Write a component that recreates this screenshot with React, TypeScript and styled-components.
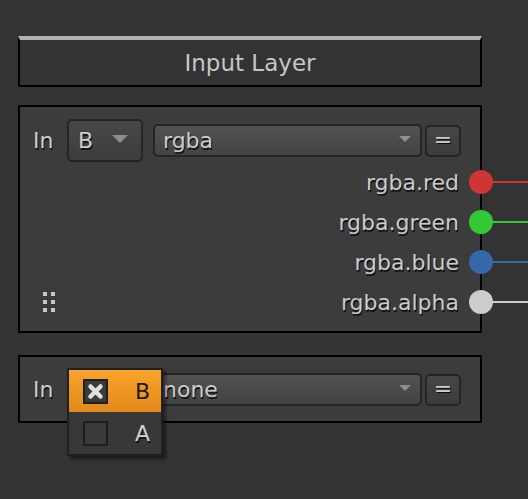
import React from "react";
import styled, { createGlobalStyle } from "styled-components";

const Global = createGlobalStyle`
  html, body { margin: 0; padding: 0; background: #333333; overflow: hidden; }
  body { font-family: "DejaVu Sans", "Liberation Sans", sans-serif; }
  * { box-sizing: border-box; }
`;

const Page = styled.div`
  width: 528px;
  height: 499px;
  padding: 36px 0 0 18px;
  display: flex;
  flex-direction: column;
`;

const TitleBox = styled.div`
  width: 464px;
  height: 51px;
  border: 2px solid #000;
  border-top: 4px solid #b2b2b2;
  display: flex;
  align-items: center;
  justify-content: center;
  color: #c6c6c6;
  font-size: 23px;
`;

const Panel = styled.div<{ $pt: number; $pb: number; $mt: number }>`
  width: 464px;
  margin-top: ${(p) => p.$mt}px;
  border: 2px solid #000;
  background: #3c3c3c;
  padding: ${(p) => p.$pt}px 0 ${(p) => p.$pb}px 13px;
  display: flex;
  flex-direction: column;
  position: relative;
`;

const Label = styled.span`
  color: #cbcbcb;
  font-size: 22px;
  text-shadow: 1px 2px 0 #141414;
  white-space: nowrap;
`;

const InputRow = styled.div`
  display: flex;
  align-items: center;
  height: 43px;
  margin-right: 19px;
  position: relative;
`;

const InLabel = styled(Label)`
  width: 34px;
`;

const Select = styled.div<{ $w: number; $h: number; $arrow: number; $ar: number }>`
  width: ${(p) => p.$w}px;
  height: ${(p) => p.$h}px;
  border: 2px solid #252525;
  border-radius: 5px;
  background: linear-gradient(#525252, #434343);
  display: flex;
  align-items: center;
  justify-content: space-between;
  padding: 0 ${(p) => p.$ar}px 0 8px;
  &::after {
    content: "";
    width: 0;
    height: 0;
    border-left: ${(p) => p.$arrow / 2}px solid transparent;
    border-right: ${(p) => p.$arrow / 2}px solid transparent;
    border-top: ${(p) => Math.round(p.$arrow / 2)}px solid #8e8e8e;
    margin-bottom: 4px;
  }
`;

const SmallSelect = styled(Select)`
  background: linear-gradient(#484848, #3d3d3d);
  margin-right: 10px;
  padding-left: 9px;
`;

const EqButton = styled.div`
  width: 36px;
  height: 32px;
  margin-left: 3px;
  border: 2px solid #252525;
  border-radius: 5px;
  background: linear-gradient(#464646, #3c3c3c);
  display: flex;
  align-items: center;
  justify-content: center;
  color: #cfcfcf;
  font-size: 22px;
  text-shadow: 1px 1px 0 #0e0e0e;
  padding-bottom: 2px;
`;

const ChannelRow = styled.div<{ $split?: boolean }>`
  height: 40px;
  display: flex;
  align-items: center;
  justify-content: ${(p) => (p.$split ? "space-between" : "flex-end")};
`;

const Port = styled.div<{ $c: string }>`
  width: 24px;
  height: 24px;
  border-radius: 50%;
  background: ${(p) => p.$c};
  margin-left: 10px;
  margin-right: -13px;
  position: relative;
  z-index: 1;
  &::after {
    content: "";
    position: absolute;
    left: 23px;
    top: 11px;
    width: 60px;
    height: 2px;
    background: ${(p) => p.$c};
  }
`;

const Right = styled.div`
  display: flex;
  align-items: center;
`;

const Dots = styled.div`
  margin-left: 10px;
  display: grid;
  grid-template-columns: 4px 4px;
  grid-auto-rows: 4px;
  gap: 4px;
`;

const Dot = styled.span`
  background: #c8c8c8;
`;

const Menu = styled.div`
  position: absolute;
  left: 0;
  top: 0;
  width: 96px;
  border: 2px solid #202020;
  background: #383838;
  box-shadow: 3px 3px 3px rgba(0, 0, 0, 0.45);
  z-index: 2;
  display: flex;
  flex-direction: column;
`;

const MenuItem = styled.div<{ $on?: boolean }>`
  height: 42px;
  display: flex;
  align-items: center;
  justify-content: space-between;
  padding: 0 11px 0 14px;
  background: ${(p) => (p.$on ? "linear-gradient(#f9a42b, #e2881b)" : "#383838")};
  color: ${(p) => (p.$on ? "#1c1c1c" : "#cfcfcf")};
  font-size: 22px;
  text-shadow: ${(p) => (p.$on ? "none" : "1px 2px 0 #141414")};
`;

const Check = styled.div`
  width: 25px;
  height: 25px;
  border: 2px solid #1e1e1e;
  background: #3a3a3a;
  display: flex;
  align-items: center;
  justify-content: center;
`;

const MenuAnchor = styled.div`
  position: relative;
  width: 76px;
  height: 43px;
  margin-right: 10px;
`;

const channels = [
  { name: "rgba.red", c: "#cf3535" },
  { name: "rgba.green", c: "#34c934" },
  { name: "rgba.blue", c: "#3767a9" },
  { name: "rgba.alpha", c: "#cccccc" },
];

export default function App() {
  return (
    <>
      <Global />
      <Page>
        <TitleBox>Input Layer</TitleBox>
        <Panel $pt={12} $pb={9} $mt={18}>
          <InputRow>
            <InLabel>In</InLabel>
            <SmallSelect $w={76} $h={43} $arrow={16} $ar={13}>
              <Label>B</Label>
            </SmallSelect>
            <Select $w={269} $h={33} $arrow={12} $ar={9}>
              <Label>rgba</Label>
            </Select>
            <EqButton>=</EqButton>
          </InputRow>
          {channels.map((ch, i) => {
            const last = i === channels.length - 1;
            return (
              <ChannelRow key={ch.name} $split={last}>
                {last && (
                  <Dots>
                    {Array.from({ length: 6 }).map((_, k) => (
                      <Dot key={k} />
                    ))}
                  </Dots>
                )}
                <Right>
                  <Label>{ch.name}</Label>
                  <Port $c={ch.c} />
                </Right>
              </ChannelRow>
            );
          })}
        </Panel>
        <Panel $pt={11} $pb={10} $mt={22}>
          <InputRow>
            <InLabel>In</InLabel>
            <MenuAnchor>
              <Menu>
                <MenuItem $on>
                  <Check>
                    <svg width="17" height="17" viewBox="0 0 17 17">
                      <path d="M3.5 3.5 L13.5 13.5 M13.5 3.5 L3.5 13.5" stroke="#e0e0e0" strokeWidth="4.5" strokeLinecap="round" />
                    </svg>
                  </Check>
                  <span>B</span>
                </MenuItem>
                <MenuItem>
                  <Check />
                  <span>A</span>
                </MenuItem>
              </Menu>
            </MenuAnchor>
            <Select $w={269} $h={33} $arrow={12} $ar={9}>
              <Label>none</Label>
            </Select>
            <EqButton>=</EqButton>
          </InputRow>
        </Panel>
      </Page>
    </>
  );
}
